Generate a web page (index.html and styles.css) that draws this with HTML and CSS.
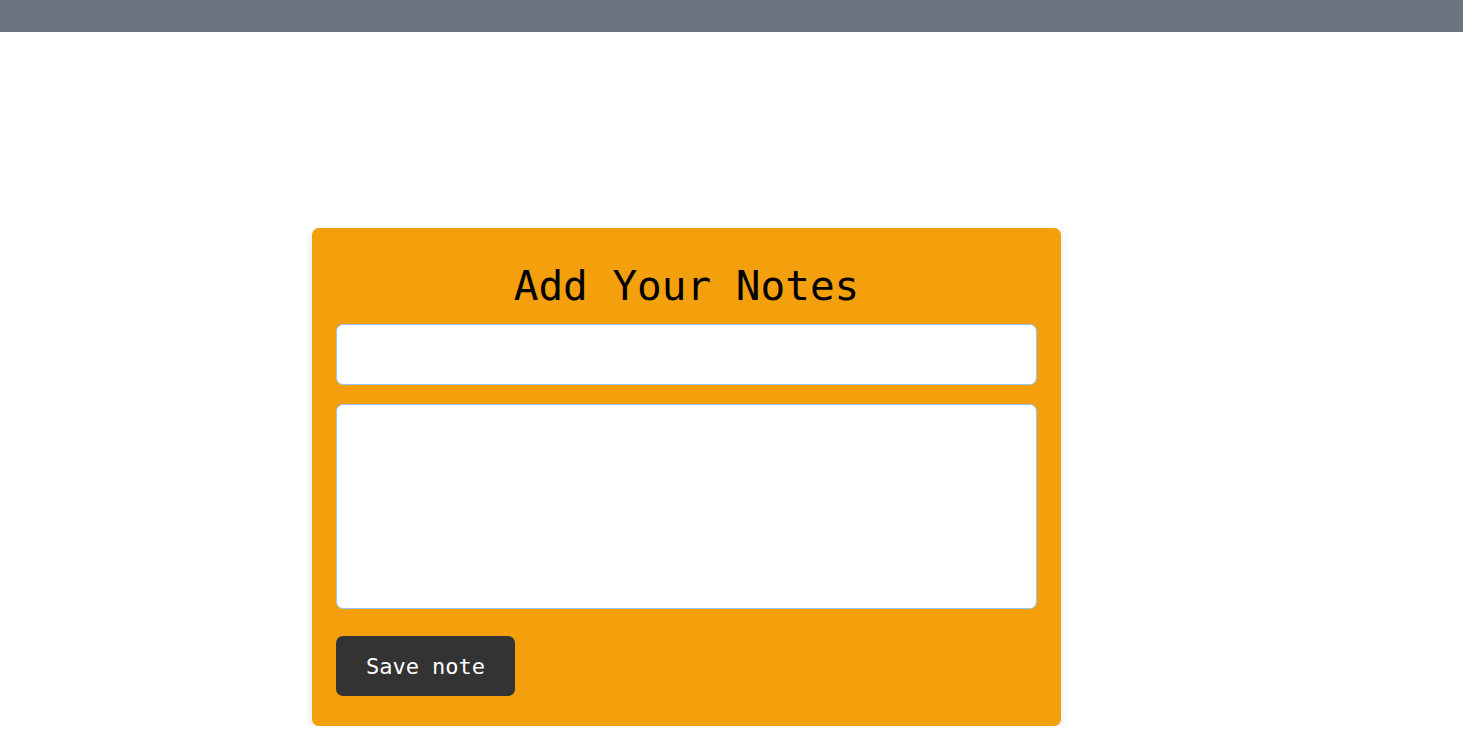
FILE: index.html
```html
<!DOCTYPE html>
<html lang="en">
<head>
<meta charset="utf-8">
<title>Notes</title>
<link rel="stylesheet" href="styles.css">
</head>
<body>
<header class="topbar"></header>
<main class="page">
  <form class="card">
    <h1 class="title">Add Your Notes</h1>
    <input class="field" type="text">
    <textarea class="field area"></textarea>
    <div class="actions">
      <button class="btn" type="button">Save note</button>
    </div>
  </form>
</main>
</body>
</html>
```
FILE: styles.css
```css
* { box-sizing: border-box; }
html, body { margin: 0; padding: 0; background: #ffffff; }
body { font-family: "DejaVu Sans Mono", "Liberation Mono", monospace; }
.topbar { height: 32px; background: #6b7280; }
.page { display: flex; padding: 196px 0 0 312px; }
.card {
  width: 749px;
  height: 498px;
  background: #f49f0c;
  border-radius: 7px;
  box-shadow: 0 4px 10px rgba(0,0,0,0.12);
  padding: 34px 24px 30px;
  display: flex;
  flex-direction: column;
}
.title {
  margin: 0 0 13px;
  font-size: 41px;
  font-weight: 400;
  line-height: 49px;
  text-align: center;
  color: #000;
}
.field {
  display: block;
  width: 701px;
  height: 61px;
  border: 1px solid #93c5fd;
  border-radius: 7px;
  background: #fff;
  font-family: inherit;
  font-size: 18px;
  padding: 8px 12px;
  outline: none;
}
.area { height: 205px; margin-top: 19px; resize: none; }
.actions { margin-top: 27px; display: flex; }
.btn {
  width: 179px;
  height: 60px;
  background: #333333;
  color: #fff;
  border: none;
  border-radius: 7px;
  font-family: inherit;
  font-size: 22px;
  cursor: pointer;
}
```
